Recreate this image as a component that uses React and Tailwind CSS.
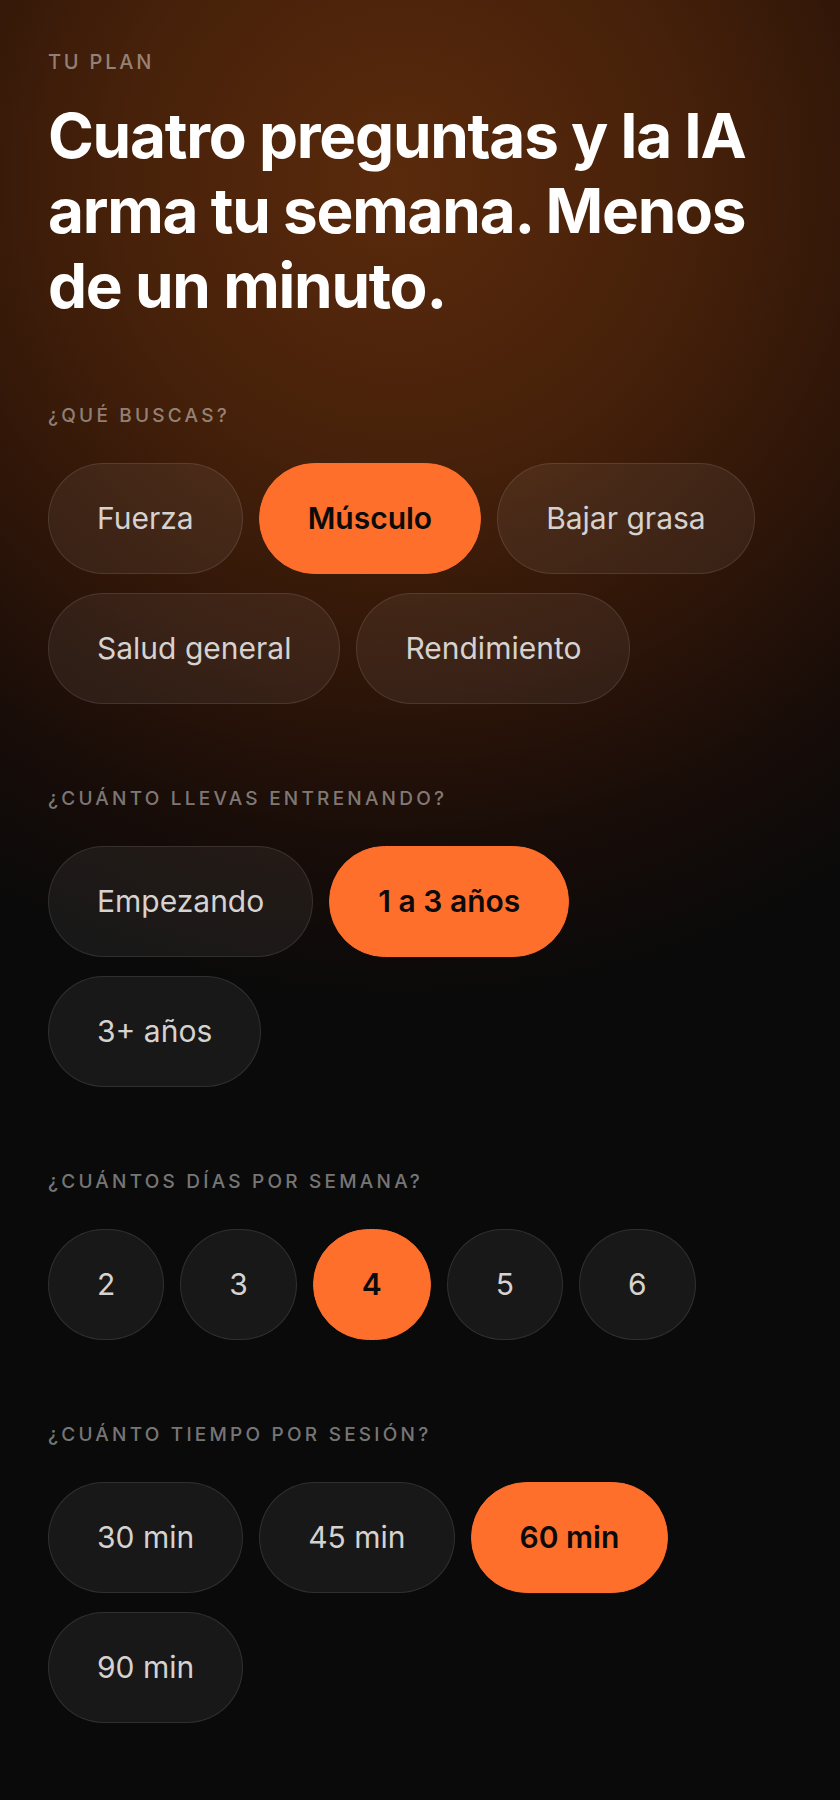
import React, { useState } from "react";

const sections = [
  {
    key: "goal",
    label: "¿Qué buscas?",
    options: ["Fuerza", "Músculo", "Bajar grasa", "Salud general", "Rendimiento"],
    initial: "Músculo",
  },
  {
    key: "experience",
    label: "¿Cuánto llevas entrenando?",
    options: ["Empezando", "1 a 3 años", "3+ años"],
    initial: "1 a 3 años",
  },
  {
    key: "days",
    label: "¿Cuántos días por semana?",
    options: ["2", "3", "4", "5", "6"],
    initial: "4",
  },
  {
    key: "time",
    label: "¿Cuánto tiempo por sesión?",
    options: ["30 min", "45 min", "60 min", "90 min"],
    initial: "60 min",
  },
];

const Pill = ({ text, active, onClick }) => (
  <button
    onClick={onClick}
    className={`rounded-full border px-[48px] py-[34px] text-[30px] leading-[41px] whitespace-nowrap ${
      active
        ? "border-[#ff6f2c] bg-[#ff6f2c] font-semibold text-[#0b0b0b]"
        : "border-white/10 bg-white/[0.06] text-[#d6d2cf]"
    }`}
  >
    {text}
  </button>
);

const App = () => {
  const [answers, setAnswers] = useState(
    Object.fromEntries(sections.map((s) => [s.key, s.initial]))
  );

  return (
    <div
      className="min-h-[1800px] w-full bg-[#0a0a0a] bg-[radial-gradient(circle_at_400px_180px,#5a2a0c_0px,#47210a_280px,#2e1508_500px,#170c08_680px,#0a0a0a_820px)] px-12 pt-12 pb-20 text-white"
      style={{ fontFamily: "Inter, 'Noto Sans', sans-serif" }}
    >
      <p className="text-[20px] leading-7 font-medium uppercase tracking-[0.14em] text-white/45">
        Tu plan
      </p>
      <h1 className="mt-[22px] text-[62px] leading-[75px] font-bold tracking-[-0.02em] text-white">
        Cuatro preguntas y la IA arma tu semana. Menos de un minuto.
      </h1>

      <div className="mt-[79px] flex flex-col gap-[81px]">
        {sections.map((section) => (
          <div key={section.key}>
            <p className="text-[19px] leading-7 font-medium uppercase tracking-[0.17em] text-white/45">
              {section.label}
            </p>
            <div className="mt-[33px] flex flex-wrap gap-x-4 gap-y-[19px]">
              {section.options.map((opt) => (
                <Pill
                  key={opt}
                  text={opt}
                  active={answers[section.key] === opt}
                  onClick={() =>
                    setAnswers((prev) => ({ ...prev, [section.key]: opt }))
                  }
                />
              ))}
            </div>
          </div>
        ))}
      </div>
    </div>
  );
};

export default App;
